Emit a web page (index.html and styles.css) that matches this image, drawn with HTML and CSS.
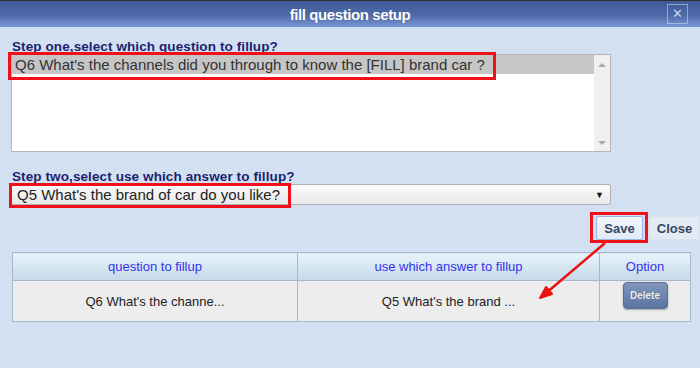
FILE: index.html
```html
<!DOCTYPE html>
<html lang="en">
<head>
  <meta charset="UTF-8">
  <title>fill question setup</title>
  <link rel="stylesheet" href="styles.css">
</head>
<body>
  <div class="titlebar">
    <span class="title">fill question setup</span>
    <span class="close-box">&#x2715;</span>
  </div>

  <div class="content">
    <div class="step-label">Step one,select which question to fillup?</div>
    <div class="listbox">
      <div class="options">
        <div class="option selected">
          <span class="marked">Q6 What's the channels did you through to know the [FILL] brand car ?<span class="mark mark-option"></span></span>
        </div>
      </div>
      <div class="scrollbar">
        <span class="arrow-up"></span>
        <span class="arrow-down"></span>
      </div>
    </div>

    <div class="step-label step-two">Step two,select use which answer to fillup?</div>
    <div class="select">
      <span class="marked">Q5 What's the brand of car do you like?<span class="mark mark-select"></span></span>
      <span class="select-arrow">&#9660;</span>
    </div>

    <div class="actions">
      <button class="btn btn-save marked">Save<span class="mark mark-save"></span></button>
      <button class="btn btn-close">Close</button>
    </div>

    <table class="fill-table">
      <thead>
        <tr>
          <th class="col-question">question to fillup</th>
          <th class="col-answer">use which answer to fillup</th>
          <th class="col-option">Option</th>
        </tr>
      </thead>
      <tbody>
        <tr>
          <td>Q6 What's the channe...</td>
          <td>Q5 What's the brand ...</td>
          <td class="cell-option"><button class="btn-delete">Delete</button></td>
        </tr>
      </tbody>
    </table>
  </div>

  <!-- annotation arrow from Save to the answer cell -->
  <svg class="annot-arrow" width="700" height="368" viewBox="0 0 700 368">
    <line x1="605" y1="243" x2="545" y2="294" stroke="#ee1111" stroke-width="2.5"/>
    <path d="M540 298 L546 287 L552 294 Z" fill="#ee1111" stroke="#ee1111" stroke-width="2" stroke-linejoin="round"/>
  </svg>
</body>
</html>
```

FILE: styles.css
```css
body {
  margin: 0;
  width: 700px;
  height: 368px;
  overflow: hidden;
  position: relative;
  font-family: "Liberation Sans", Arial, sans-serif;
  background-color: #d3e0f2;
}

.titlebar {
  height: 27px;
  box-sizing: border-box;
  border-top: 1px solid #2e2e2e;
  background: linear-gradient(#3f5b98, #4d69a8 55%, #7b97d3);
  display: flex;
  align-items: center;
  justify-content: center;
  position: relative;
}

.title {
  color: #ffffff;
  font-weight: bold;
  font-size: 15px;
  letter-spacing: -0.4px;
  text-shadow: 0 0 1px rgba(0, 0, 0, 0.3);
}

.close-box {
  position: absolute;
  right: 12px;
  top: 3px;
  width: 19px;
  height: 18px;
  border: 1px solid rgba(220, 230, 250, 0.5);
  color: #c9d6ee;
  font-size: 13px;
  line-height: 18px;
  text-align: center;
}

.content {
  padding: 13px 0 0 11px;
}

.step-label {
  color: #1c1f70;
  font-weight: bold;
  font-size: 13.5px;
  line-height: 14px;
  letter-spacing: 0.1px;
  padding-left: 1px;
}

.step-two {
  margin-top: 18px;
}

.listbox {
  width: 600px;
  height: 98px;
  box-sizing: border-box;
  border: 1px solid #b5b5b5;
  background-color: #ffffff;
  display: flex;
}

.options {
  flex: 1;
}

.option {
  height: 19px;
  line-height: 19px;
  padding-left: 3px;
  font-size: 15px;
  color: #333333;
}

.option.selected {
  background-color: #c6c6c6;
}

.marked {
  position: relative;
  display: inline-block;
}

.mark {
  position: absolute;
  border: 3px solid #f0101a;
  pointer-events: none;
}

.mark-option {
  left: -7px;
  right: -11px;
  top: -3px;
  bottom: -6px;
}

.scrollbar {
  width: 16px;
  background-color: #f0f0f0;
  display: flex;
  flex-direction: column;
  justify-content: space-between;
  align-items: center;
  padding: 8px 0 6px;
}

.arrow-up,
.arrow-down {
  width: 0;
  height: 0;
  border-left: 4px solid transparent;
  border-right: 4px solid transparent;
}

.arrow-up {
  border-bottom: 4px solid #a8a8a8;
}

.arrow-down {
  border-top: 4px solid #a8a8a8;
}

.select {
  width: 600px;
  height: 21px;
  box-sizing: border-box;
  border: 1px solid #b0b0b0;
  border-radius: 2px;
  background: linear-gradient(#fbfbfb, #e9e9e9);
  display: flex;
  align-items: center;
  justify-content: space-between;
  padding: 0 6px 0 5px;
  font-size: 15px;
  color: #222222;
}

.mark-select {
  left: -8px;
  right: -11px;
  top: -3px;
  bottom: -5px;
}

.select-arrow {
  font-size: 9px;
  color: #111111;
}

.actions {
  display: flex;
  justify-content: flex-end;
  gap: 6px;
  margin-top: 11px;
}

.btn {
  height: 24px;
  font-family: "Liberation Sans", Arial, sans-serif;
  font-weight: bold;
  font-size: 13px;
  color: #35495e;
  padding: 0 5px;
  border-radius: 2px;
}

.btn-save {
  width: 47px;
  background: linear-gradient(#f1f6fc, #e1eaf6);
  border: 1px solid #98b6e4;
}

.mark-save {
  left: -7px;
  right: -6px;
  top: -5px;
  bottom: -4px;
}

.btn-close {
  width: 51px;
  background: #e3eaf4;
  border: 1px solid #d9e2ef;
}

.fill-table {
  margin-top: 12px;
  margin-left: 1px;
  width: 679px;
  border-collapse: collapse;
  font-size: 13px;
}

.fill-table th,
.fill-table td {
  border: 1px solid #a9b8c8;
  text-align: center;
  padding: 0;
}

.fill-table th {
  height: 27px;
  font-weight: normal;
  color: #3333ee;
  background: linear-gradient(#e8f4fb, #c5d9e9);
}

.fill-table td {
  height: 39px;
  color: #222222;
  background-color: #ededed;
}

.col-question {
  width: 284px;
}

.col-answer {
  width: 301px;
}

.fill-table .cell-option {
  vertical-align: top;
  padding-top: 1px;
}

.btn-delete {
  width: 45px;
  height: 27px;
  border: 1px solid #5b6f95;
  border-radius: 4px;
  background: linear-gradient(#8196bc, #5b74a2);
  color: #eef2fa;
  font-family: "Liberation Sans", Arial, sans-serif;
  font-weight: bold;
  font-size: 10px;
  text-shadow: 0 0 1px rgba(0, 0, 0, 0.4);
  box-shadow: 0 1px 2px rgba(0, 0, 0, 0.3);
}

.annot-arrow {
  position: absolute;
  left: 0;
  top: 0;
  pointer-events: none;
}
```
